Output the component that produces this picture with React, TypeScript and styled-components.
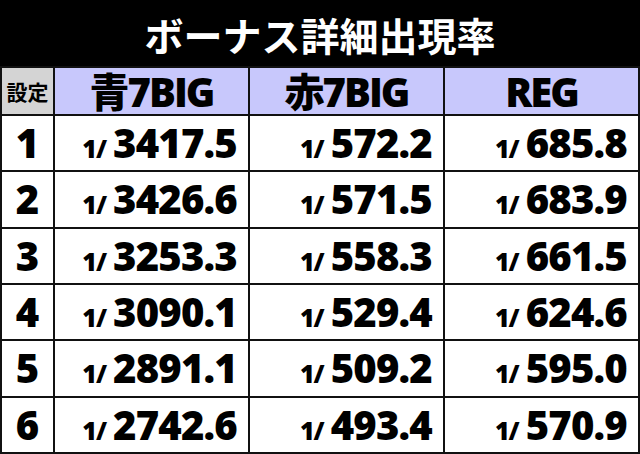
import React from "react";
import styled, { createGlobalStyle } from "styled-components";

const Global = createGlobalStyle`
  html, body { margin: 0; padding: 0; background: #000; }
  body { width: 640px; height: 454px; overflow: hidden; }
`;

const FONT = `"Open Sans", "Noto Sans CJK JP", sans-serif`;

const Page = styled.div`
  width: 640px;
  height: 454px;
  display: flex;
  flex-direction: column;
  background: #000;
`;

const Title = styled.div`
  height: 66px;
  flex: none;
  display: flex;
  align-items: center;
  justify-content: center;
  padding-top: 3px;
  box-sizing: border-box;
  color: #fff;
  font-family: "Noto Sans CJK JP", sans-serif;
  font-weight: 700;
  font-size: 39px;
  line-height: 1;
`;

const Grid = styled.div`
  flex: 1;
  min-height: 0;
  display: grid;
  grid-template-columns: 51px repeat(3, 1fr);
  grid-template-rows: 46px repeat(6, 1fr);
  gap: 2px;
  padding: 2px;
  background: #111;
  font-family: ${FONT};
  font-weight: 800;
  color: #000;
`;

const Corner = styled.div`
  background: #d4d4d4;
  display: flex;
  align-items: center;
  justify-content: center;
  font-family: "Noto Sans CJK JP", sans-serif;
  font-weight: 700;
  font-size: 21px;
`;

const Head = styled.div`
  background: #c8c8fc;
  display: flex;
  align-items: center;
  justify-content: center;
  font-size: 40px;
  letter-spacing: -2px;
  line-height: 1;
  padding-top: 1px;
`;

const Setting = styled.div`
  background: #fff;
  display: flex;
  align-items: center;
  justify-content: center;
  font-size: 40px;
  line-height: 1;
`;

const Cell = styled.div`
  background: #fff;
  display: flex;
  align-items: center;
  justify-content: flex-end;
  padding-right: 11px;
  line-height: 1;
  overflow: hidden;
`;

const Value = styled.div`
  display: flex;
  align-items: baseline;
`;

const Small = styled.span`
  font-size: 25px;
  letter-spacing: -1px;
  margin-right: 7px;
`;

const Big = styled.span`
  font-size: 40px;
  letter-spacing: -0.8px;
`;

const rows: [string, string, string, string][] = [
  ["1", "3417.5", "572.2", "685.8"],
  ["2", "3426.6", "571.5", "683.9"],
  ["3", "3253.3", "558.3", "661.5"],
  ["4", "3090.1", "529.4", "624.6"],
  ["5", "2891.1", "509.2", "595.0"],
  ["6", "2742.6", "493.4", "570.9"],
];

const Prob = ({ v }: { v: string }) => (
  <Cell>
    <Value>
      <Small>1/</Small>
      <Big>{v}</Big>
    </Value>
  </Cell>
);

export default function App() {
  return (
    <Page>
      <Global />
      <Title>ボーナス詳細出現率</Title>
      <Grid>
        <Corner>設定</Corner>
        <Head>青7BIG</Head>
        <Head>赤7BIG</Head>
        <Head>REG</Head>
        {rows.map((r) => (
          <React.Fragment key={r[0]}>
            <Setting>{r[0]}</Setting>
            <Prob v={r[1]} />
            <Prob v={r[2]} />
            <Prob v={r[3]} />
          </React.Fragment>
        ))}
      </Grid>
    </Page>
  );
}
